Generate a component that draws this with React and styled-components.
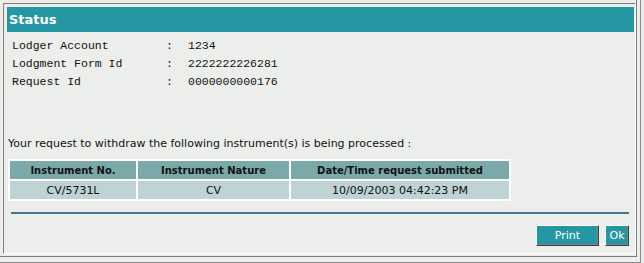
import { Fragment } from "react";
import { createGlobalStyle, styled } from "styled-components";

const GlobalStyle = createGlobalStyle`
  html, body {
    margin: 0;
    padding: 0;
    background: #eceeeb;
  }
  body {
    font-family: "DejaVu Sans", Verdana, sans-serif;
  }
`;

// outer window edges (the two grey lines right and bottom)
const Window = styled.div`
  width: 640px;
  height: 262px;
  border-right: 1px solid #8a8a8a;
  border-bottom: 1px solid #8a8a8a;
  box-sizing: content-box;
`;

const Frame = styled.div`
  width: 637px;
  height: 257px;
  border-right: 1px solid #7d7d7d;
  border-bottom: 1px solid #7d7d7d;
  padding: 3px 0 0 3px;
  box-sizing: border-box;
  background: #eceeeb;
`;

const Panel = styled.div`
  width: 633px;
  height: 251px;
  box-sizing: border-box;
  border-top: 1px solid #808080;
  border-left: 1px solid #808080;
  border-right: 1px solid #ffffff;
  border-bottom: 1px solid #ffffff;
  padding: 3px 1px 0 3px;
  display: flex;
  flex-direction: column;
  align-items: stretch;
`;

const Header = styled.div`
  height: 25px;
  line-height: 26px;
  background: #2597a3;
  color: #ffffff;
  font-weight: bold;
  font-size: 13px;
  padding-left: 2px;
`;

const Details = styled.div`
  display: grid;
  grid-template-columns: 153px 23px auto;
  margin: 5px 0 0 5px;
  font-family: "Liberation Mono", "Courier New", monospace;
  font-size: 11.5px;
  line-height: 18px;
  color: #111111;
`;

const Colon = styled.span`
  text-align: left;
  padding-left: 1px;
`;

const Message = styled.div`
  margin: 46px 0 0 1px;
  font-size: 11px;
  line-height: 14px;
  color: #111111;
`;

const Table = styled.table`
  align-self: flex-start;
  margin: 8px 0 0 1px;
  background: #ffffff;
  border-spacing: 2px;
  font-size: 11px;
  color: #111111;
`;

const HeadCell = styled.th`
  background: #7ba9aa;
  height: 18px;
  padding: 0;
  font-size: 10px;
  font-weight: bold;
  text-align: center;
  width: ${(p) => p.$w}px;
`;

const Cell = styled.td`
  background: #bdd3d4;
  height: 18px;
  padding: 0;
  text-align: center;
`;

const Rule = styled.div`
  height: 2px;
  background: #3b7f8a;
  margin: 11px 5px 0 4px;
`;

const Actions = styled.div`
  display: flex;
  justify-content: flex-end;
  gap: 6px;
  margin: 11px 5px 0 0;
`;

const Button = styled.button`
  height: 21px;
  width: ${(p) => p.$w}px;
  padding: 0;
  background: #2597a3;
  color: #ffffff;
  font-family: "DejaVu Sans", Verdana, sans-serif;
  font-size: 11px;
  border: 1px solid;
  border-color: #ffffff #404040 #404040 #ffffff;
  box-shadow: inset -1px -1px 0 #808080;
`;

const rows = [
  ["Lodger Account", "1234"],
  ["Lodgment Form Id", "2222222226281"],
  ["Request Id", "0000000000176"],
];

export default function App() {
  return (
    <>
      <GlobalStyle />
      <Window>
        <Frame>
          <Panel>
            <Header>Status</Header>
            <Details>
              {rows.map(([label, value]) => (
                <Fragment key={label}>
                  <span>{label}</span>
                  <Colon>:</Colon>
                  <span>{value}</span>
                </Fragment>
              ))}
            </Details>
            <Message>
              Your request to withdraw the following instrument(s) is being processed :
            </Message>
            <Table>
              <thead>
                <tr>
                  <HeadCell $w={126}>Instrument No.</HeadCell>
                  <HeadCell $w={151}>Instrument Nature</HeadCell>
                  <HeadCell $w={218}>Date/Time request submitted</HeadCell>
                </tr>
              </thead>
              <tbody>
                <tr>
                  <Cell>CV/5731L</Cell>
                  <Cell>CV</Cell>
                  <Cell>10/09/2003 04:42:23 PM</Cell>
                </tr>
              </tbody>
            </Table>
            <Rule />
            <Actions>
              <Button $w={63}>Print</Button>
              <Button $w={24}>Ok</Button>
            </Actions>
          </Panel>
        </Frame>
      </Window>
    </>
  );
}
